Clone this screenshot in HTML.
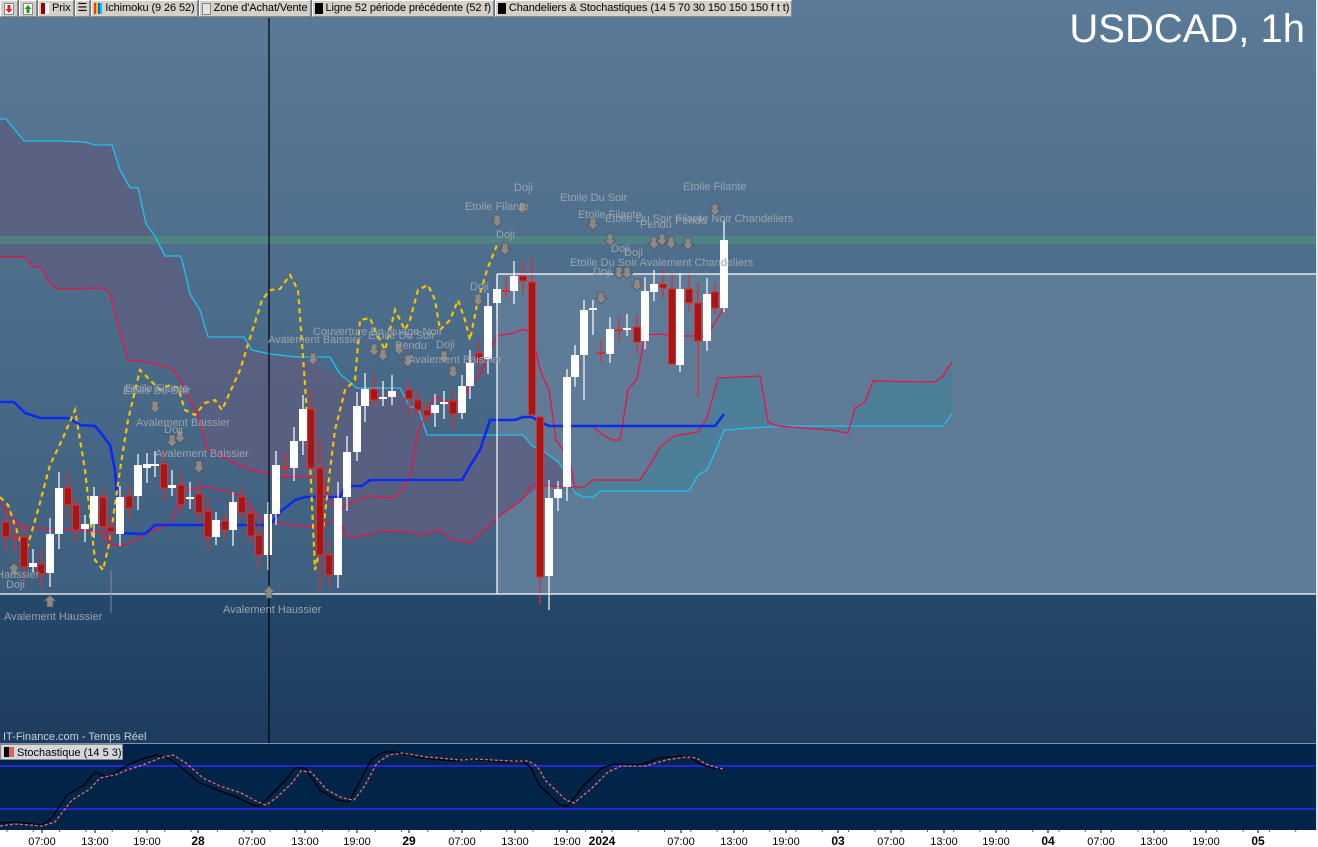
<!DOCTYPE html>
<html><head><meta charset="utf-8"><style>
html,body{margin:0;padding:0;width:1318px;height:847px;overflow:hidden;background:#fff;font-family:"Liberation Sans",sans-serif}
#legend{position:absolute;left:0;top:0;height:18px;display:flex;gap:0;font-size:11px;z-index:5;letter-spacing:-0.1px}
#legend div{background:#d4d0c8;border:1px solid #888;border-top-color:#fff;border-left-color:#fff;height:15px;line-height:15px;padding:0 2px;margin-right:1px;white-space:nowrap;color:#000;display:flex;align-items:center}
.sq{display:inline-block;width:8px;height:11px;margin-right:3px}
svg{position:absolute;left:0;top:0}
</style></head><body>
<div id="legend">
<div style="padding:0 2px;width:12px;justify-content:center"><svg width="10" height="12" style="position:static"><rect x="0.5" y="0.5" width="9" height="11" fill="#fff" stroke="#888"/><path d="M3.5 2h3v4h2l-3.5 4-3.5-4h2z" fill="#e02020"/></svg></div>
<div style="padding:0 2px;width:12px;justify-content:center"><svg width="10" height="12" style="position:static"><rect x="0.5" y="0.5" width="9" height="11" fill="#fff" stroke="#888"/><path d="M3.5 10h3v-4h2l-3.5-4-3.5 4h2z" fill="#10a010"/></svg></div>
<div><span class="sq" style="background:linear-gradient(90deg,#900 50%,#fff 50%)"></span>Prix</div>
<div>&#9776;</div>
<div><span class="sq" style="background:linear-gradient(90deg,#f30 25%,#fc0 25%,#fc0 50%,#06f 50%,#06f 75%,#0cf 75%)"></span>Ichimoku (9 26 52)</div>
<div><span class="sq" style="border:1px solid #888;width:7px;height:10px;background:#e4e4e4"></span>Zone d'Achat/Vente</div>
<div><span class="sq" style="background:#000"></span>Ligne 52 période précédente (52 f)</div>
<div><span class="sq" style="background:#000"></span>Chandeliers &amp; Stochastiques (14 5 70 30 150 150 150 f t t)</div>
</div>
<svg id="c" width="1318" height="847" xmlns="http://www.w3.org/2000/svg" font-family="Liberation Sans, sans-serif">
<defs>
<linearGradient id="bg1" x1="0" y1="0" x2="0" y2="1"><stop offset="0" stop-color="#5a7a97"/><stop offset="1" stop-color="#3f5f80"/></linearGradient>
<linearGradient id="bg2" x1="0" y1="0" x2="0" y2="1"><stop offset="0" stop-color="#25486b"/><stop offset="1" stop-color="#1e3c60"/></linearGradient>
</defs>
<rect x="0" y="0" width="1318" height="594" fill="url(#bg1)"/>
<rect x="0" y="594" width="1318" height="149" fill="url(#bg2)"/>
<rect x="497" y="274" width="819" height="320" fill="#5e7b97"/>
<polygon fill="#5c5f80" fill-opacity="0.85" points="0,119 6,119 24,141 60,141 85,142 95,145 112,145 120,170 130,188 138,188 146,224 155,236 165,256 180,256 182,260 190,294 200,310 208,337 244,337 252,350 270,354 295,357 340,374 357,388 400,388 410,407 418,407 427,435 523,435 532,446 540,449 549,455 558,462 567,474 575,493 540,485 523,499 497,518 488,527 470,543 452,539 438,530 420,535 410,532 380,531 368,535 347,538 340,520 320,478 280,476 250,470 207,450 197,413 186,393 180,380 172,369 163,366 146,362 128,360 116,318 110,293 104,288 58,289 50,284 41,267 33,267 24,257 0,257"/>
<polygon fill="#4a8099" fill-opacity="0.75" points="575,493 584,497 593,497 601,491 689,491 698,475 707,470 716,450 724,430 790,426 943,426 952,414 952,362 943,376 935,382 873,381 865,402 855,408 848,433 830,430 792,426 778,426 768,422 760,376 735,377 718,378 707,418 698,432 674,436 660,447 650,465 640,480 593,480 584,487 567,487 540,485"/>
<rect x="0" y="236" width="1316" height="8" fill="#4f8a80" fill-opacity="0.75"/>
<g fill="none" stroke-width="1.3">
<polyline stroke="#1cc4ee" points="0,119 6,119 24,141 60,141 85,142 95,145 112,145 120,170 130,188 138,188 146,224 155,236 165,256 180,256 182,260 190,294 200,310 208,337 244,337 252,350 270,354 295,357 330,357 340,374 357,388 400,388 410,407 418,407 427,435 523,435 532,446 540,449 549,455 558,462 567,474 575,493 584,497 593,497 601,491 689,491 698,475 707,470 716,450 724,430 750,428 790,426 943,426 952,414"/>
<polyline stroke="#ee1144" points="0,257 24,257 33,267 41,267 50,284 58,289 104,288 110,293 116,318 128,360 146,362 163,366 172,369 180,380 186,393 197,413 207,450 250,470 280,476 320,478 340,520 347,538 368,535 380,531 410,532 420,535 438,530 452,539 470,543 488,527 497,518 515,505 523,499 532,485 567,487 584,487 593,480 640,480 650,465 660,447 674,436 698,432 707,418 718,378 760,376 768,422 778,426 830,430 848,433 855,408 865,402 873,381 935,382 943,376 952,362"/>
<polyline stroke="#ee1144" points="0,503 22,528 40,528 105,532 110,545 125,545 150,532 170,524 185,490 208,487 240,495 262,520 290,525 320,528 330,523 345,505 368,496 395,498 410,478 418,432 435,396 442,401 462,401 470,385 480,375 497,336 514,333 523,329 532,333 540,370 549,390 556,440 570,460 575,490"/>
<polyline stroke="#ee1144" points="593,427 603,435 612,440 620,440 628,390 637,379 645,335 660,334 673,336 707,336 723,309"/>
<polyline stroke="#0a2cf0" stroke-width="2.6" points="0,402 14,402 25,413 40,418 68,418 80,425 95,426 100,432 110,445 115,470 120,533 145,534 155,525 270,525 280,512 295,500 305,497 340,497 345,486 362,486 370,480 462,480 470,466 480,450 490,420 515,420 523,417 532,417 540,422 549,426 715,426 724,414"/>
<polyline stroke="#f5c400" stroke-width="2.2" stroke-dasharray="5,4" points="0,497 8,505 20,540 28,545 38,510 50,465 62,440 75,410 85,470 95,560 103,570 110,540 120,470 128,420 140,370 150,380 160,390 170,385 178,388 185,410 195,415 205,403 215,400 222,410 240,370 250,338 262,300 270,290 280,289 290,275 298,290 304,370 310,460 315,570 322,540 330,470 335,430 345,390 355,380 360,320 370,318 375,330 385,350 395,310 405,330 410,320 418,290 428,285 435,300 440,330 450,320 458,300 465,320 470,340 478,300 487,270 497,245"/>
</g>
<g id="candles"></g>
<g stroke="#fff" stroke-width="1.2">
<line x1="0" y1="594" x2="1316" y2="594"/>
<line x1="497" y1="274" x2="1316" y2="274"/>
<line x1="497" y1="274" x2="497" y2="594"/>
</g>
<line x1="111" y1="570" x2="111" y2="613" stroke="#7a8a9a"/>
<line x1="269" y1="18" x2="269" y2="743" stroke="#000" stroke-width="1.2"/>
<g id="arrows"></g>
<g fill="#9aa3ad" font-size="11" id="labels">
<text x="4" y="620">Avalement Haussier</text>
<text x="6" y="588">Doji</text>
<text x="-4" y="578">Haussier</text>
<text x="223" y="613">Avalement Haussier</text>
<text x="123" y="394">Etoile Du Soir</text>
<text x="125" y="392">Etoile Filante</text>
<text x="136" y="426">Avalement Baissier</text>
<text x="164" y="433">Doji</text>
<text x="155" y="457">Avalement Baissier</text>
<text x="268" y="343">Avalement Baissier</text>
<text x="313" y="335">Couverture En Nuage Noir</text>
<text x="368" y="339">Etoile Du Soir</text>
<text x="395" y="349">Pendu</text>
<text x="436" y="348">Doji</text>
<text x="408" y="363">Avalement Baissier</text>
<text x="470" y="290">Doji</text>
<text x="496" y="238">Doji</text>
<text x="465" y="210">Etoile Filante</text>
<text x="514" y="191">Doji</text>
<text x="560" y="201">Etoile Du Soir</text>
<text x="578" y="218">Etoile Filante</text>
<text x="605" y="222">Etoile Du Soir Filante Noir Chandeliers</text>
<text x="640" y="228">Pendu</text>
<text x="675" y="224">Pendu</text>
<text x="683" y="190">Etoile Filante</text>
<text x="624" y="256">Doji</text>
<text x="611" y="252">Doji</text>
<text x="570" y="266">Etoile Du Soir Avalement Chandeliers</text>
<text x="593" y="275">Doji</text>
</g>
<text x="1305" y="42" fill="#fff" font-size="40" text-anchor="end">USDCAD, 1h</text>
<text x="3" y="740" fill="#c8d0d8" font-size="11">IT-Finance.com - Temps Réel</text>
<rect x="0" y="743" width="1318" height="87" fill="#022449"/>
<line x1="0" y1="743.5" x2="1318" y2="743.5" stroke="#7d93a8"/>
<line x1="0" y1="766" x2="1316" y2="766" stroke="#2424d8" stroke-width="2"/>
<line x1="0" y1="809" x2="1316" y2="809" stroke="#2424d8" stroke-width="2"/>
<polyline fill="none" stroke="#000" stroke-width="1.3" points="0,823 15,822 42,825 51,819 67,795 84,785 95,772 109,778 122,768 139,760 156,755 168,758 181,767 198,782 215,789 236,797 253,805 259,806 269,797 286,780 295,768 305,768 320,790 337,800 349,802 358,785 371,760 383,752 396,752 421,758 455,761 467,759 505,762 522,760 531,768 539,785 560,805 568,806 585,784 602,768 615,764 640,765 660,758 680,756 690,757 700,764 712,768 724,769"/>
<polyline fill="none" stroke="#e07070" stroke-width="1.3" stroke-dasharray="3,2" points="0,826 15,824 42,826 55,822 72,800 90,789 100,778 115,775 127,770 143,765 160,758 173,755 186,763 203,778 220,786 241,793 258,802 266,805 276,798 292,783 301,771 311,772 326,789 342,798 354,800 364,787 377,763 389,755 402,753 427,757 461,760 473,759 511,761 528,761 537,766 546,781 566,800 574,803 591,789 608,772 621,766 646,766 666,760 686,757 696,758 706,764 718,768 724,769"/>
<g>
<rect x="0.5" y="744.5" width="122" height="15" fill="#d4d8dc" stroke="#888"/>
<rect x="4" y="747" width="5" height="10" fill="#000"/><rect x="9" y="747" width="5" height="10" fill="#e06060"/>
<text x="17" y="756" font-size="11" fill="#000">Stochastique (14 5 3)</text>
</g>
<rect x="0" y="830" width="1318" height="17" fill="#fff"/>
<g id="axis" font-size="11" fill="#000" text-anchor="middle"></g>
<rect x="1316" y="0" width="2" height="830" fill="#dfe3e8"/>
</svg>
<script>
var ns="http://www.w3.org/2000/svg";
function el(t,a,p){var e=document.createElementNS(ns,t);for(var k in a)e.setAttribute(k,a[k]);p.appendChild(e);return e;}
var C=[[6,'r',522,537],[15,'r',537,538],[24,'r',537,567],[33,'w',563,567],[41,'r',564,574],[50,'w',534,573],[59,'w',488,534],[68,'r',488,505],[76,'r',505,530],[85,'w',524,529],[94,'w',496,524],[103,'r',497,527],[111,'r',527,532],[120,'w',497,534],[129,'r',496,508],[138,'w',465,496],[147,'w',464,468],[155,'w',464,466],[164,'r',464,488],[172,'w',485,488],[181,'r',485,505],[190,'w',497,499],[199,'r',494,513],[208,'r',511,537],[216,'w',520,537],[225,'r',521,530],[233,'w',502,530],[242,'r',497,513],[251,'r',513,536],[259,'r',535,555],[268,'w',514,555],[276,'w',465,514],[285,'r',466,467],[294,'w',441,468],[303,'w',409,441],[311,'r',409,468],[320,'r',468,555],[329,'r',555,575],[338,'w',498,575],[347,'w',452,497],[357,'w',406,452],[365,'w',389,406],[374,'r',389,400],[383,'w',397,399],[392,'w',391,397],[409,'r',390,399],[418,'r',400,410],[427,'r',410,416],[435,'w',405,413],[444,'w',402,404],[453,'r',401,414],[462,'w',386,413],[470,'w',363,386],[479,'r',353,359],[488,'w',306,359],[497,'w',289,303],[506,'r',290,292],[514,'w',276,291],[523,'r',276,281],[532,'r',282,415],[540,'r',417,577],[549,'w',498,576],[558,'w',489,498],[567,'w',377,487],[575,'w',355,377],[584,'w',310,355],[593,'w',308,310],[601,'r',352,354],[610,'w',329,354],[619,'r',329,331],[627,'w',328,330],[637,'r',327,342],[645,'w',291,341],[654,'w',284,292],[663,'r',284,288],[672,'r',289,364],[680,'w',289,365],[689,'r',289,303],[698,'r',303,341],[707,'w',294,341],[715,'r',292,308],[724,'w',240,308]];
var W={532:[258,415],540:[417,605],549:[480,610],698:[283,397],672:[272,365],584:[300,400],593:[300,335],320:[440,590],269:[505,598],311:[390,470],724:[220,312]};
var g=document.getElementById('candles');
C.forEach(function(c){var x=c[0],col=c[1]=='r'?'#e02a2a':'#fff',t=c[2],b=c[3];
var w=W[x]||[t-8-(x*7%9),b+6+(x*5%11)];
el('line',{x1:x,y1:w[0],x2:x,y2:w[1],stroke:col,'stroke-width':1.2},g);
if(b-t<3){el('rect',{x:x-4,y:t,width:8,height:2,fill:col},g);}
else if(c[1]=='r'){el('rect',{x:x-3.5,y:t,width:7,height:b-t,fill:'#a01818',stroke:'#e03030','stroke-width':1},g);}
else el('rect',{x:x-4,y:t,width:8,height:b-t,fill:'#fff'},g);});
var A=document.getElementById('arrows');
function arr(x,y,up){var p=up?[[x,y],[x+6,y+6],[x+3,y+6],[x+3,y+12],[x-3,y+12],[x-3,y+6],[x-6,y+6]]:[[x-3,y],[x+3,y],[x+3,y+6],[x+6,y+6],[x,y+12],[x-6,y+6],[x-3,y+6]];
el('polygon',{points:p.map(function(q){return q.join(',')}).join(' '),fill:'#8a8a8a',stroke:'#555','stroke-width':0.8},A);}
[[155,401],[180,431],[172,435],[199,461],[313,353],[374,344],[383,349],[399,343],[408,355],[444,351],[453,366],[478,294],[497,215],[505,243],[522,202],[593,218],[610,234],[601,292],[619,267],[627,267],[637,279],[654,237],[662,234],[671,237],[688,238],[715,204]].forEach(function(a){arr(a[0],a[1],false)});
[[14,563],[50,595],[269,586]].forEach(function(a){arr(a[0],a[1],true)});
var ax=document.getElementById('axis');
[[42,'07:00'],[95,'13:00'],[147,'19:00'],[198,'28',1],[252,'07:00'],[305,'13:00'],[357,'19:00'],[409,'29',1],[462,'07:00'],[515,'13:00'],[567,'19:00'],[602,'2024',1],[681,'07:00'],[734,'13:00'],[786,'19:00'],[838,'03',1],[891,'07:00'],[944,'13:00'],[996,'19:00'],[1048,'04',1],[1101,'07:00'],[1154,'13:00'],[1206,'19:00'],[1258,'05',1]].forEach(function(l){
var t=el('text',{x:l[0],y:845},ax);t.textContent=l[1];if(l[2]){t.setAttribute('font-weight','bold');t.setAttribute('font-size','12');}
el('line',{x1:l[0],y1:830,x2:l[0],y2:833,stroke:'#000'},ax);});
for(var x=7;x<1316;x+=26.3){el('line',{x1:x,y1:830,x2:x,y2:832,stroke:'#666'},ax);}
</script>
</body></html>
